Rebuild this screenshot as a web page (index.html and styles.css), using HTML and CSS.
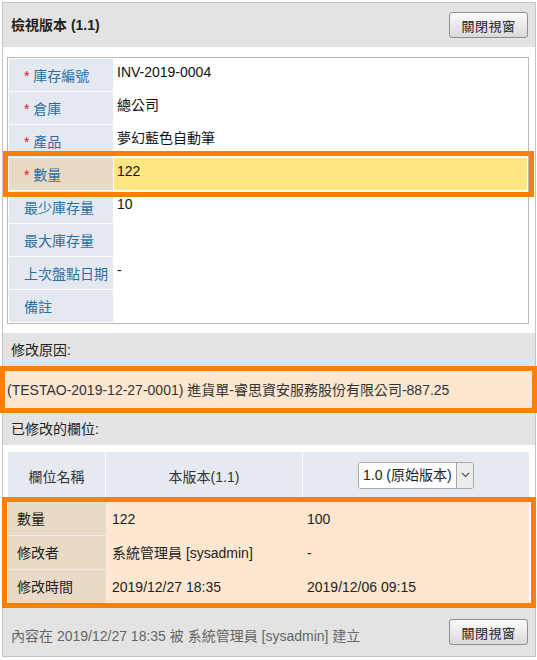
FILE: index.html
```html
<!DOCTYPE html>
<html lang="zh-Hant">
<head>
    <meta charset="UTF-8">
    <meta name="viewport" content="width=device-width, initial-scale=1.0">
    <title>檢視版本</title>
    <link rel="stylesheet" href="styles.css">
</head>
<body>

    <div class="dialog">

        <!-- Title bar -->
        <div class="bar bar-top">
            <h1 class="title">檢視版本 (1.1)</h1>
            <button class="btn" type="button">關閉視窗</button>
        </div>

        <!-- Record fields of this version -->
        <div class="info">
            <table class="fields">
                <tr>
                    <th class="label"><span class="req">*</span> 庫存編號</th>
                    <td class="value">INV-2019-0004</td>
                </tr>
                <tr>
                    <th class="label"><span class="req">*</span> 倉庫</th>
                    <td class="value">總公司</td>
                </tr>
                <tr>
                    <th class="label"><span class="req">*</span> 產品</th>
                    <td class="value">夢幻藍色自動筆</td>
                </tr>
                <tr class="changed">
                    <th class="label"><span class="req">*</span> 數量</th>
                    <td class="value">122</td>
                </tr>
                <tr>
                    <th class="label">最少庫存量</th>
                    <td class="value">10</td>
                </tr>
                <tr>
                    <th class="label">最大庫存量</th>
                    <td class="value"></td>
                </tr>
                <tr>
                    <th class="label">上次盤點日期</th>
                    <td class="value">-</td>
                </tr>
                <tr>
                    <th class="label">備註</th>
                    <td class="value"></td>
                </tr>
            </table>
            <!-- highlight frame over the changed row -->
            <div class="mark mark-row"></div>
        </div>

        <!-- Reason -->
        <div class="section-head">修改原因:</div>
        <div class="reason">(TESTAO-2019-12-27-0001) 進貨單-睿思資安服務股份有限公司-887.25</div>

        <!-- Changed fields -->
        <div class="section-head section-head-short">已修改的欄位:</div>
        <div class="compare">
            <table class="diff">
                <colgroup>
                    <col class="col-name">
                    <col class="col-this">
                    <col>
                </colgroup>
                <thead>
                    <tr>
                        <th>欄位名稱</th>
                        <th>本版本(1.1)</th>
                        <th>
                            <div class="picker">
                                <select class="picker-input">
                                    <option>1.0 (原始版本)</option>
                                </select>
                                <span class="picker-btn">
                                    <svg width="9" height="6" viewBox="0 0 9 6"><polyline points="1,1 4.5,4.5 8,1" fill="none" stroke="#555" stroke-width="1.1"/></svg>
                                </span>
                            </div>
                        </th>
                    </tr>
                </thead>
                <tbody>
                    <tr>
                        <td class="diff-label">數量</td>
                        <td>122</td>
                        <td>100</td>
                    </tr>
                    <tr>
                        <td class="diff-label">修改者</td>
                        <td>系統管理員 [sysadmin]</td>
                        <td>-</td>
                    </tr>
                    <tr>
                        <td class="diff-label">修改時間</td>
                        <td>2019/12/27 18:35</td>
                        <td>2019/12/06 09:15</td>
                    </tr>
                </tbody>
            </table>
        </div>

        <!-- Footer -->
        <div class="bar bar-bottom">
            <span class="meta">內容在 2019/12/27 18:35 被 系統管理員 [sysadmin] 建立</span>
            <button class="btn" type="button">關閉視窗</button>
        </div>

    </div>

</body>
</html>
```

FILE: styles.css
```css
/* General page styling */
body {
    margin: 0;
    font-family: "Liberation Sans", "Noto Sans CJK TC", sans-serif;
    font-size: 14px;
    line-height: 18px;
    color: #222;
}

/* Outer dialog box */
.dialog {
    width: 534px;
    margin: 2px 0 0 2px;
    border: 1px solid #c4c4c4;
    box-sizing: border-box;
    background: #fff;
}

/* Top and bottom bars */
.bar {
    display: flex;
    justify-content: space-between;
    align-items: center;
    background: #e3e3e3;
    padding: 0 7px 0 8px;
}

.bar-top {
    height: 44px;
}

.bar-bottom {
    height: 48px;
}

.title {
    margin: 0;
    font-size: 14px;
    font-weight: bold;
    color: #222;
}

.btn {
    width: 79px;
    height: 26px;
    padding: 0;
    font-family: inherit;
    font-size: 13px;
    letter-spacing: 0.5px;
    color: #222;
    border: 1px solid #8e8e8e;
    border-radius: 3px;
    background: linear-gradient(#fbfbfb, #d9d9d9);
    box-shadow: inset 0 1px 0 #fff;
}

.meta {
    color: #666;
    padding-top: 7px;
}

/* Fields of the record */
.info {
    position: relative;
    padding: 10px 6px 9px 4px;
}

.fields {
    width: 100%;
    border: 1px solid #bbb;
    border-spacing: 1px;
}

.fields th,
.fields td {
    box-sizing: border-box;
    height: 32px;
    padding: 0;
}

.label {
    width: 104px;
    padding: 2px 0 0 15px !important;
    background: #e4e9f0;
    color: #2a6ea6;
    font-weight: normal;
    text-align: left;
    vertical-align: middle;
    white-space: nowrap;
}

.req {
    color: #e8121d;
}

.value {
    padding: 4px 0 0 3px !important;
    vertical-align: top;
    color: #111;
}

.changed .label {
    background: #e9dac6;
}

.changed .value {
    background: #ffe680;
}

/* Orange annotation frames */
.mark {
    position: absolute;
    border: 5px solid #ff8000;
    box-sizing: border-box;
    pointer-events: none;
}

.mark-row {
    top: 104px;
    left: 0;
    right: 1px;
    height: 46px;
}

/* Section headings */
.section-head {
    height: 33px;
    display: flex;
    align-items: center;
    padding-left: 8px;
    background: #e3e3e3;
    color: #222;
}

.section-head-short {
    height: 32px;
}

.reason {
    position: relative;
    height: 47px;
    display: flex;
    align-items: center;
    padding-left: 4px;
    background: #fde7d1;
    color: #333;
}

.reason::after {
    content: "";
    position: absolute;
    top: 0;
    bottom: 0;
    left: -3px;
    right: -2px;
    border: 5px solid #ff8000;
}

/* Version comparison table */
.compare {
    position: relative;
    padding: 7px 6px 5px 5px;
}

.compare::after {
    content: "";
    position: absolute;
    top: 52px;
    bottom: 0;
    left: -1px;
    right: -1px;
    border: 5px solid #ff8000;
}

.diff {
    width: 100%;
    table-layout: fixed;
    border-spacing: 0;
}

.col-name {
    width: 98px;
}

.col-this {
    width: 197px;
}

.diff th,
.diff td {
    box-sizing: border-box;
}

.diff th {
    height: 49px;
    padding: 0;
    background: #e5eaf1;
    border-right: 1px solid #fff;
    font-weight: normal;
    color: #333;
    text-align: center;
    vertical-align: middle;
}

.diff th:last-child {
    border-right: 0;
}

.diff td {
    height: 34px;
    padding: 0 0 0 6px;
    background: #fde7d1;
    border-top: 1px solid #fde7d1;
    color: #222;
    vertical-align: middle;
}

.diff td:nth-child(3) {
    padding-left: 4px;
}

.diff .diff-label {
    padding-left: 9px;
    background: #e9dac6;
    border-top-color: #f5ede3;
}

/* Version picker */
.picker {
    display: inline-flex;
    height: 27px;
    margin-top: -3px;
    border: 1px solid #aaa;
    border-radius: 3px;
    box-sizing: border-box;
    background: #fff;
    overflow: hidden;
    vertical-align: middle;
}

.picker-input {
    appearance: none;
    border: 0;
    padding: 0 4px;
    font-family: inherit;
    font-size: 14px;
    color: #222;
    background: #fff;
}

.picker-btn {
    width: 16px;
    display: flex;
    align-items: center;
    justify-content: center;
    border-left: 1px solid #aaa;
    background: #ececec;
}
```
